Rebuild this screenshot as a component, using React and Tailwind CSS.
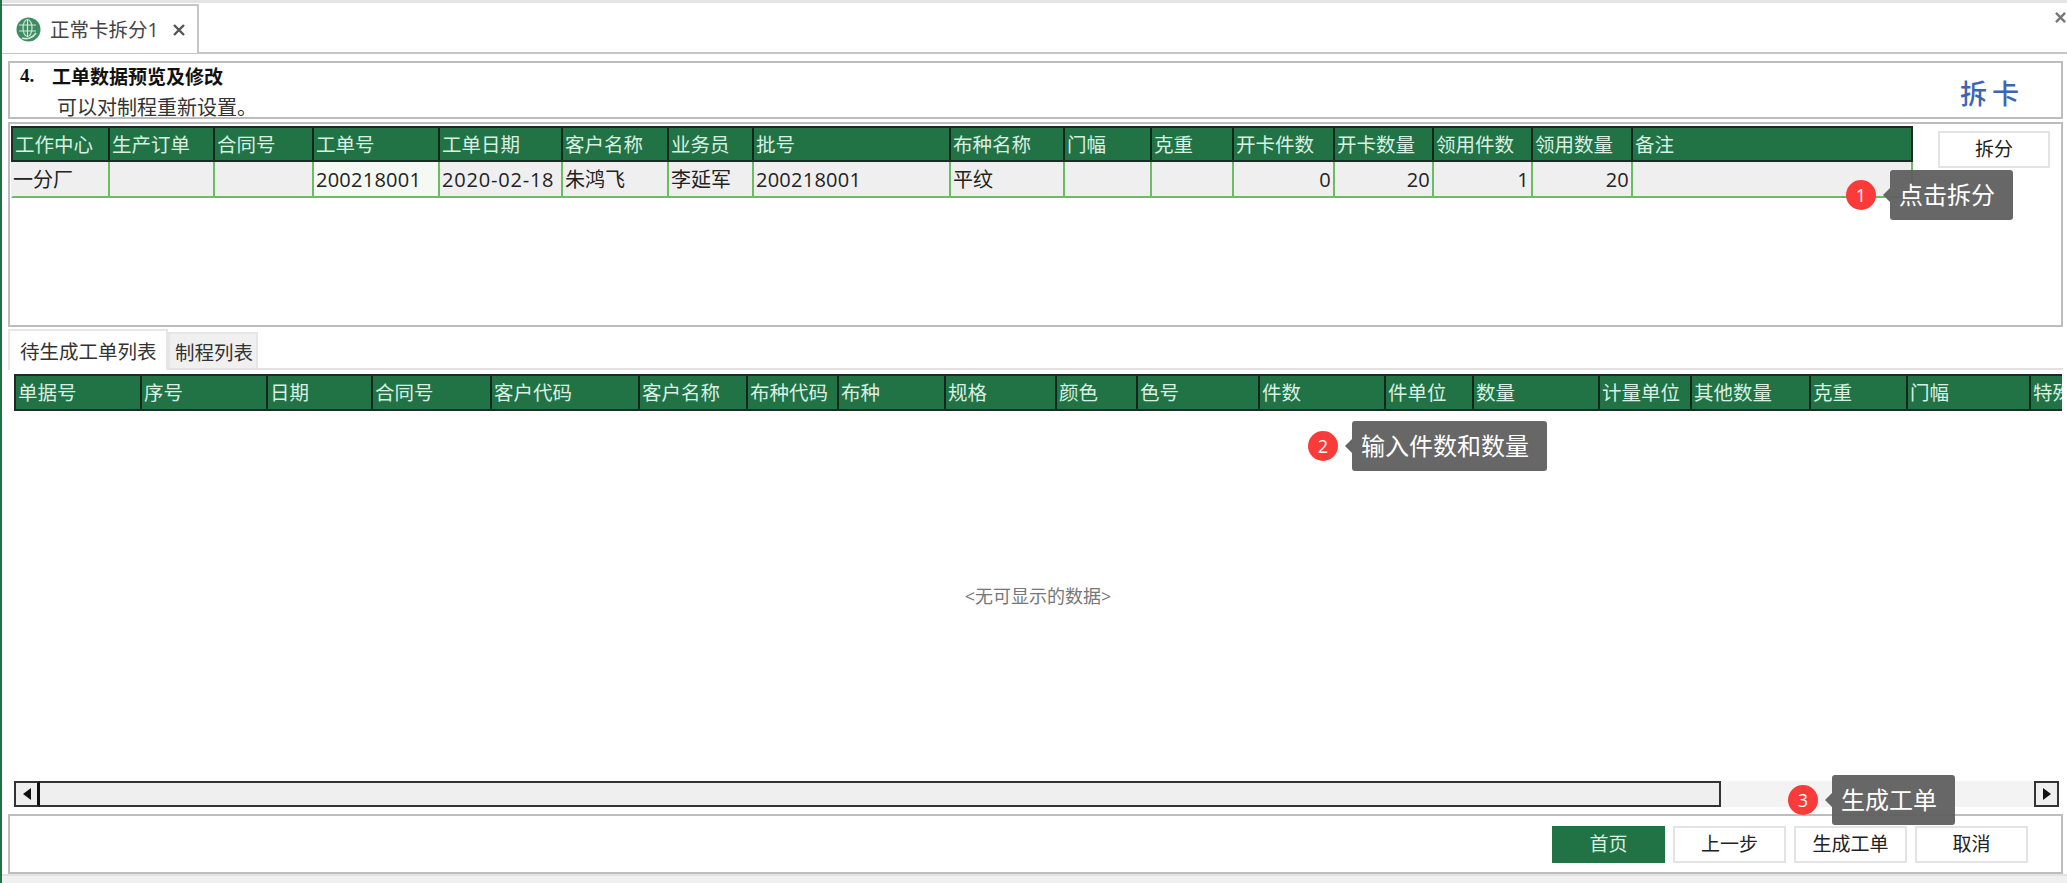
import React from "react";

const topCols = "grid-cols-[97px_105px_99px_126px_123px_106px_85px_197px_114px_87px_82px_101px_99px_99px_100px_280px]";
const topHead = ["工作中心","生产订单","合同号","工单号","工单日期","客户名称","业务员","批号","布种名称","门幅","克重","开卡件数","开卡数量","领用件数","领用数量","备注"];
const topRow = [
  { v: "一分厂", first: true }, { v: "" }, { v: "" },
  { v: "200218001", hl: true, num: true },
  { v: "2020-02-18", date: true },
  { v: "朱鸿飞" }, { v: "李延军" },
  { v: "200218001", num: true },
  { v: "平纹" }, { v: "" }, { v: "" },
  { v: "0", right: true, num: true }, { v: "20", right: true, num: true },
  { v: "1", right: true, num: true }, { v: "20", right: true, num: true }, { v: "" },
];
const lowHead = ["单据号","序号","日期","合同号","客户代码","客户名称","布种代码","布种","规格","颜色","色号","件数","件单位","数量","计量单位","其他数量","克重","门幅","特殊"];

function Globe() {
  return (
    <svg width="25" height="25" viewBox="0 0 25 25" className="shrink-0">
      <circle cx="12.5" cy="12.5" r="12" fill="#3f8c62" />
      <g stroke="#cfe6d9" strokeWidth="1.2" fill="none">
        <ellipse cx="11.5" cy="11" rx="4.5" ry="8.5" />
        <path d="M11.5 2.5v17M3 8h17M3 14h17" />
        <path d="M6 21c5 1.5 11 0 14-5" strokeWidth="1.6" />
      </g>
    </svg>
  );
}

function Tip({ n, text, className }) {
  return (
    <div className={`absolute flex items-center ${className}`}>
      <div className="w-[30px] h-[30px] rounded-full bg-[#fb3a3a] text-white text-[18px] flex items-center justify-center shrink-0">{n}</div>
      <div className="ml-[7px] w-0 h-0 border-y-[7px] border-y-transparent border-r-[7px] border-r-[#666666] shrink-0" />
      <div className="h-[50px] pl-[9px] pr-[18px] rounded-[3px] bg-[#5f5f5f]/95 text-white text-[24px] leading-[50px] whitespace-nowrap">{text}</div>
    </div>
  );
}

function Btn({ children, green, className = "" }) {
  return (
    <div className={`h-[37px] flex items-center justify-center text-[19px] border-2 ${green ? "bg-[#217346] border-[#217346] text-[#d9efe2]" : "bg-white border-[#e3e3e3] text-[#222]"} ${className}`}>
      {children}
    </div>
  );
}

export default function App() {
  return (
    <div className="relative w-[2067px] h-[883px] overflow-hidden bg-white flex flex-col border-l-[2px] border-[#217346] text-[#222]" style={{ fontFamily: '"Open Sans","Noto Sans CJK SC",sans-serif' }}>
      {/* tab bar */}
      <div className="h-[54px] shrink-0 border-t-[3px] border-[#e4e4e4] border-b-[2px] border-b-[#c6c6c6] flex items-stretch justify-between">
        <div className="w-[197px] mt-[1px] -mb-[1px] border-t-2 border-r-2 border-[#c6c6c6] bg-white flex items-center pl-[14px] gap-[9px]">
          <Globe />
          <span className="text-[19.5px] text-[#444] whitespace-nowrap">正常卡拆分1</span>
          <span className="ml-[5px] text-[#555]">
            <svg width="12" height="12" viewBox="0 0 12 12"><path d="M1 1l10 10M11 1L1 11" stroke="#555" strokeWidth="2.4" /></svg>
          </span>
        </div>
        <div className="mr-[1px] mt-[9px]">
          <svg width="11" height="11" viewBox="0 0 12 12"><path d="M1 1l10 10M11 1L1 11" stroke="#777" strokeWidth="2.6" /></svg>
        </div>
      </div>

      <div className="flex-1 min-h-0 flex flex-col pl-[6px] pr-[4px] pt-[7px]">
        {/* title panel */}
        <div className="h-[58px] shrink-0 border-2 border-[#bdbdbd] flex justify-between">
          <div className="pl-[10px] pt-[1px]">
            <div className="text-[19px] leading-[24px] font-bold text-[#111] flex" style={{ fontFamily: '"Noto Sans CJK SC","Liberation Serif",serif' }}>
              <span className="w-[32px]" style={{ fontFamily: '"Liberation Serif",serif' }}>4.</span>
              <span>工单数据预览及修改</span>
            </div>
            <div className="mt-[11px] text-[20px] leading-[18px] pl-[37px] text-[#333]">可以对制程重新设置。</div>
          </div>
          <div className="mt-[12px] mr-[37px] text-[27px] leading-[36px] tracking-[5px] font-medium text-[#3c66b0]" style={{ fontFamily: '"Noto Sans CJK SC",serif' }}>拆卡</div>
        </div>

        {/* upper panel */}
        <div className="h-[205px] shrink-0 mt-[3px] border-2 border-[#bdbdbd] pl-[1px] pt-[2px] flex items-start">
          <div className="w-[1902px] shrink-0">
            <div className={`h-[36px] grid ${topCols} bg-[#217346] border-2 border-[#1d2b24]`}>
              {topHead.map((h, i) => (
                <div key={i} className="border-r-2 border-[#14261c] last:border-r-0 text-[19.5px] leading-[34px] text-[#d8efe2] pl-[2px] whitespace-nowrap overflow-hidden">{h}</div>
              ))}
            </div>
            <div className={`h-[36px] grid ${topCols} bg-[#efefef] border-b-2 border-[#6cbd62] border-x-2 border-l-[#efefef] border-r-[#6cbd62]`}>
              {topRow.map((c, i) => (
                <div
                  key={i}
                  className={`border-r-2 border-[#6cbd62] last:border-r-0 text-[20px] leading-[35px] whitespace-nowrap overflow-hidden ${c.first ? "pl-0" : "pl-[2px]"} ${c.right ? "text-right pr-[2px]" : "text-left"} ${c.hl ? "bg-[#f4f9f4]" : ""} ${c.num ? "tracking-[0.25px]" : ""} ${c.date ? "tracking-[0.8px]" : ""}`}
                >
                  {c.v}
                </div>
              ))}
            </div>
          </div>
          <Btn className="ml-[25px] mt-[5px] w-[112px]">拆分</Btn>
        </div>

        {/* tabs */}
        <div className="h-[41px] shrink-0 flex items-end">
          <div className="w-[160px] h-[41px] bg-white border-t-2 border-x-2 border-[#e6e6e6] text-[19.5px] leading-[42px] pl-[10px] text-[#333] whitespace-nowrap -mb-[2px] z-10">待生成工单列表</div>
          <div className="w-[90px] h-[38px] bg-[#f0f0f0] border-2 border-[#e6e6e6] text-[19.5px] leading-[38px] pl-[5px] text-[#333] whitespace-nowrap -mb-[2px]">制程列表</div>
        </div>

        {/* lower panel */}
        <div className="flex-1 min-h-0 border-t-2 border-[#e2e2e2] flex flex-col pl-[6px] pr-[1px] pt-[4px]">
          <div className="h-[37px] shrink-0 overflow-hidden border-y-2 border-[#1d2b24] border-l-2 border-l-[#1d2b24] bg-[#217346]">
            <div className="w-[2120px] h-full grid grid-cols-[126px_126px_105px_119px_148px_108px_91px_107px_111px_81px_122px_126px_88px_126px_92px_119px_97px_123px_100px]">
              {lowHead.map((h, i) => (
                <div key={i} className="border-r-2 border-[#14261c] text-[19.5px] leading-[34px] text-[#d8efe2] pl-[2px] whitespace-nowrap overflow-hidden">{h}</div>
              ))}
            </div>
          </div>
          <div className="flex-1 min-h-0 flex items-center justify-center text-[18px] text-[#777]">&lt;无可显示的数据&gt;</div>
          <div className="h-[26px] shrink-0 flex mb-[7px]">
            <div className="w-[26px] bg-[#efefef] border-2 border-[#333] border-r-[3px] border-r-[#111] flex items-center justify-center">
              <svg width="8" height="12" viewBox="0 0 8 12"><path d="M8 0v12L0 6z" fill="#111" /></svg>
            </div>
            <div className="w-[1681px] bg-[#efefef] border-2 border-l-0 border-[#333]" />
            <div className="flex-1 bg-[#f3f3f3]" />
            <div className="w-[25px] mr-[3px] bg-[#efefef] border-2 border-[#333] flex items-center justify-center">
              <svg width="8" height="12" viewBox="0 0 8 12"><path d="M0 0v12L8 6z" fill="#111" /></svg>
            </div>
          </div>
        </div>

        {/* footer */}
        <div className="h-[60px] shrink-0 border-2 border-[#bdbdbd] flex items-center justify-end pr-[33px]">
          <Btn green className="w-[113px] mr-[8px]">首页</Btn>
          <Btn className="w-[113px] mr-[8px]">上一步</Btn>
          <Btn className="w-[113px] mr-[8px]">生成工单</Btn>
          <Btn className="w-[113px]">取消</Btn>
        </div>
      </div>

      <div className="h-[9px] shrink-0 bg-[#f0f0f0] border-t-2 border-[#e2e2e2]" />

      <Tip n="1" text="点击拆分" className="left-[1844px] top-[170px]" />
      <Tip n="2" text="输入件数和数量" className="left-[1306px] top-[421px]" />
      <Tip n="3" text="生成工单" className="left-[1786px] top-[775px]" />
    </div>
  );
}
